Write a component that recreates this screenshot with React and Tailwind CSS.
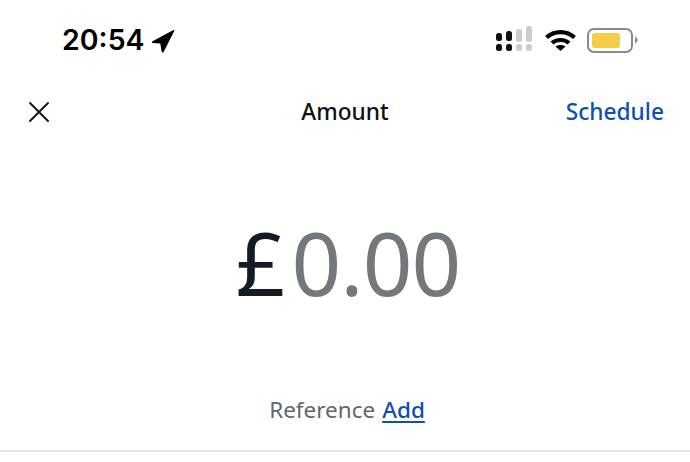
export default function App() {
  return (
    <div className="w-[690px] h-[462px] bg-white flex flex-col overflow-hidden font-['Noto_Sans','Open_Sans',sans-serif]">
      <div className="h-[80px] shrink-0 flex items-center justify-between pl-[62px] pr-[52px]">
        <div className="flex items-center gap-[6px] pt-[1px] font-['Inter',sans-serif] font-semibold text-[28.5px] leading-none text-black">
          <span>20:54</span>
          <svg width="24" height="24" viewBox="0 0 24 24"><path d="M1.5 12.2 22 1.2c.8-.4 1.5.3 1.1 1.1L12.6 23c-.5.9-1.7.8-1.9-.2L9.3 14.6 1.8 14c-1-.1-1.2-1.3-.3-1.8Z" fill="#000"/></svg>
        </div>
        <div className="flex items-center">
          <svg width="37" height="28" viewBox="0 0 37 28">
            <rect x="0" y="7" width="6" height="8" rx="2.5" fill="#111"/>
            <rect x="10" y="5" width="6" height="10" rx="2.5" fill="#111"/>
            <rect x="20" y="3" width="6" height="13" rx="2.5" fill="#ccc"/>
            <rect x="30" y="0" width="6" height="16" rx="2.5" fill="#ccc"/>
            <rect x="0" y="18" width="6" height="7" rx="2.5" fill="#111"/>
            <rect x="10" y="18" width="6" height="7" rx="2.5" fill="#111"/>
            <rect x="20" y="18" width="6" height="7" rx="2.5" fill="#ccc"/>
            <rect x="30" y="18" width="6" height="7" rx="2.5" fill="#ccc"/>
          </svg>
          <svg className="ml-[11px]" width="33" height="24" viewBox="0 0 33 24" fill="none">
            <path d="M2.5 9.5C10 2.2 23 2.2 30.5 9.5" stroke="#000" strokeWidth="4.2"/>
            <path d="M8 15c4.5-4 12.5-4 17 0" stroke="#000" strokeWidth="4.2"/>
            <path d="M16.5 23 11.5 18.4c2.8-2 7.2-2 10 0L16.5 23Z" fill="#000"/>
          </svg>
          <div className="ml-[10px] w-[46px] h-[25px] rounded-[7px] border-2 border-[#8a8a8a] p-[3px] flex">
            <div className="w-[28px] h-full rounded-[3px] bg-[#f4cc47]"></div>
          </div>
          <div className="ml-[2px] w-0 h-0 border-y-[4px] border-y-transparent border-l-[3px] border-l-[#8a8a8a]"></div>
        </div>
      </div>
      <div className="h-[64px] shrink-0 flex items-center justify-between pl-[28px] pr-[26px] relative">
        <svg width="22" height="22" viewBox="0 0 22 22" fill="none" stroke="#111827" strokeWidth="2" strokeLinecap="round"><path d="M2 2l18 18M20 2 2 20"/></svg>
        <span className="absolute left-0 right-0 text-center text-[22.7px] font-medium text-[#111] pointer-events-none">Amount</span>
        <span className="text-[22.7px] font-medium text-[#0f4fb0]">Schedule</span>
      </div>
      <div className="h-[237px] shrink-0 flex items-center justify-center text-[87px] leading-none font-normal pl-[6px]">
        <span className="text-[#141b25]">£</span>
        <span className="text-[#74787b] ml-[6px] tracking-[-1px]">0.00</span>
      </div>
      <div className="h-[58px] shrink-0 flex items-center justify-center gap-[7px] text-[22.5px] pl-[4px]">
        <span className="text-[#63676b]">Reference</span>
        <span className="text-[#0f4fb0] font-medium underline underline-offset-3">Add</span>
      </div>
      <div className="h-[2px] mt-[11px] shrink-0 bg-[#e6e6e6]"></div>
    </div>
  );
}
